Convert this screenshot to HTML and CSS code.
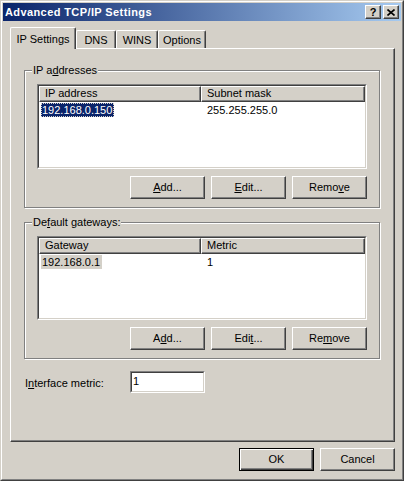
FILE: index.html
```html
<!DOCTYPE html>
<html>
<head>
<meta charset="utf-8">
<link rel="stylesheet" href="styles.css">
</head>
<body>
<div class="window">
  <div class="frame">
    <div class="titlebar">
      <span class="title">Advanced TCP/IP Settings</span>
      <div class="caption-buttons">
        <span class="cap-btn help">?</span>
        <span class="cap-btn close"><svg width="8" height="7" viewBox="0 0 8 7"><path d="M0.5 0.5L7.5 6.5M7.5 0.5L0.5 6.5" stroke="#000" stroke-width="1.6" fill="none"/></svg></span>
      </div>
    </div>
    <div class="tabs">
      <div class="tab active w-ip">IP Settings</div>
      <div class="tab w-dns">DNS</div>
      <div class="tab w-wins">WINS</div>
      <div class="tab w-opt">Options</div>
    </div>
    <div class="panel">
      <div class="group">
        <div class="group-label">IP a<u>d</u>dresses</div>
        <div class="listview lv1">
          <div class="lv-in">
            <div class="lv-head">
              <div class="hcell">IP address</div>
              <div class="hcell">Subnet mask</div>
            </div>
            <div class="lv-row">
              <div class="cell c1"><span class="sel focused">192.168.0.150</span></div>
              <div class="cell c2">255.255.255.0</div>
            </div>
          </div>
        </div>
        <div class="btn-row">
          <button class="btn"><u>A</u>dd...</button>
          <button class="btn"><u>E</u>dit...</button>
          <button class="btn">Remo<u>v</u>e</button>
        </div>
      </div>
      <div class="group g2">
        <div class="group-label">De<u>f</u>ault gateways:</div>
        <div class="listview lv2">
          <div class="lv-in">
            <div class="lv-head">
              <div class="hcell">Gateway</div>
              <div class="hcell">Metric</div>
            </div>
            <div class="lv-row">
              <div class="cell c1"><span class="sel">192.168.0.1</span></div>
              <div class="cell c2">1</div>
            </div>
          </div>
        </div>
        <div class="btn-row">
          <button class="btn">A<u>d</u>d...</button>
          <button class="btn">Edi<u>t</u>...</button>
          <button class="btn">Re<u>m</u>ove</button>
        </div>
      </div>
      <div class="metric-row">
        <span class="metric-label">I<u>n</u>terface metric:</span>
        <div class="textbox"><div class="textbox-in">1</div></div>
      </div>
    </div>
    <div class="dialog-buttons">
      <button class="btn default">OK</button>
      <button class="btn">Cancel</button>
    </div>
  </div>
</div>
</body>
</html>
```
FILE: styles.css
```css
* { box-sizing: border-box; }
html, body { margin: 0; padding: 0; background: #d4d0c8; }
body {
  font-family: "Liberation Sans", Arial, sans-serif;
  font-size: 11px;
  color: #000;
}
.window {
  width: 404px;
  height: 481px;
  border: 1px solid;
  border-color: #d4d0c8 #404040 #404040 #d4d0c8;
  background: #d4d0c8;
}
.frame {
  height: 100%;
  border: 1px solid;
  border-color: #ffffff #808080 #808080 #ffffff;
  padding: 1px;
}
.titlebar {
  height: 18px;
  background: linear-gradient(to right, #0a246a, #a6caf0);
  display: flex;
  align-items: center;
  justify-content: space-between;
}
.title {
  color: #fff;
  font-weight: bold;
  font-size: 11px;
  letter-spacing: 0.4px;
  padding-left: 2px;
  line-height: 18px;
  white-space: nowrap;
}
.caption-buttons {
  display: flex;
  gap: 2px;
  margin-right: 2px;
}
.cap-btn {
  width: 16px;
  height: 14px;
  background: #d4d0c8;
  border: 1px solid;
  border-color: #fff #404040 #404040 #fff;
  box-shadow: inset -1px -1px #808080;
  display: flex;
  align-items: center;
  justify-content: center;
}
.help {
  font-weight: bold;
  font-size: 11px;
  line-height: 12px;
}
.close svg { display: block; margin-left: -1px; }
.tabs {
  display: flex;
  align-items: flex-end;
  height: 21px;
  margin-top: 6px;
  padding-left: 7px;
}
.tab {
  height: 18px;
  background: #d4d0c8;
  border-left: 1px solid #fff;
  border-top: 1px solid #fff;
  border-right: 1px solid #404040;
  box-shadow: inset -1px 0 #808080;
  border-radius: 2px 2px 0 0;
  text-align: center;
  line-height: 13px;
  padding-top: 3px;
  white-space: nowrap;
}
.tab.active {
  height: 22px;
  margin-bottom: -1px;
  padding-top: 5px;
  position: relative;
  z-index: 1;
}
.w-ip { width: 66px; }
.w-dns { width: 40px; }
.w-wins { width: 42px; }
.w-opt { width: 48px; }
.panel {
  margin-left: 7px;
  width: 385px;
  height: 394px;
  border: 1px solid;
  border-color: #fff #404040 #404040 #fff;
  box-shadow: inset -1px -1px #808080;
  padding: 21px 14px 0 13px;
}
.group {
  border: 1px solid #808080;
  box-shadow: inset 1px 1px #fff, 1px 1px #fff;
  padding: 0 12px 8px 12px;
}
.group.g2 { margin-top: 14px; }
.group-label {
  width: fit-content;
  margin: -7px 0 0 -5px;
  padding: 0 1px;
  background: #d4d0c8;
  line-height: 13px;
  white-space: nowrap;
}
.listview {
  margin-top: 7px;
  border: 1px solid;
  border-color: #808080 #fff #fff #808080;
}
.lv1 { height: 85px; }
.lv2 { height: 84px; }
.lv-in {
  height: 100%;
  border: 1px solid;
  border-color: #404040 #d4d0c8 #d4d0c8 #404040;
  background: #fff;
}
.lv-head, .lv-row {
  display: grid;
  grid-template-columns: 162px 1fr;
}
.hcell {
  height: 16px;
  background: #d4d0c8;
  border: 1px solid;
  border-color: #fff #404040 #404040 #fff;
  box-shadow: inset -1px -1px #808080;
  padding-left: 5px;
  line-height: 13px;
  white-space: nowrap;
}
.lv-row { margin-top: 1px; line-height: 14px; }
.cell { white-space: nowrap; height: 14px; }
.c1 { padding-left: 2px; }
.c2 { padding-left: 6px; }
.sel {
  display: inline-block;
  padding: 0 2px 0 1px;
  background: #d4d0c8;
  line-height: 14px;
}
.sel.focused {
  background: #0a246a;
  color: #fff;
  outline: 1px dotted #d4d0c8;
  outline-offset: -1px;
}
.btn-row {
  display: flex;
  justify-content: flex-end;
  gap: 6px;
  margin-top: 7px;
}
.btn {
  width: 75px;
  height: 23px;
  padding: 0;
  margin: 0;
  font: inherit;
  color: #000;
  background: #d4d0c8;
  border: 1px solid;
  border-color: #fff #404040 #404040 #fff;
  box-shadow: inset -1px -1px #808080;
  line-height: 13px;
  text-align: center;
}
.btn.default {
  border-color: #000;
  box-shadow: inset 1px 1px #fff, inset -1px -1px #404040, inset -2px -2px #808080;
}
.metric-row {
  display: grid;
  grid-template-columns: 106px 75px;
  align-items: center;
  margin-top: 12px;
}
.metric-label { padding-left: 1px; padding-top: 2px; white-space: nowrap; }
.textbox {
  height: 22px;
  border: 1px solid;
  border-color: #808080 #fff #fff #808080;
}
.textbox-in {
  height: 100%;
  border: 1px solid;
  border-color: #404040 #d4d0c8 #d4d0c8 #404040;
  background: #fff;
  padding-left: 1px;
  line-height: 16px;
}
.dialog-buttons {
  display: flex;
  justify-content: flex-end;
  gap: 6px;
  margin-top: 6px;
  padding-right: 6px;
}
```
